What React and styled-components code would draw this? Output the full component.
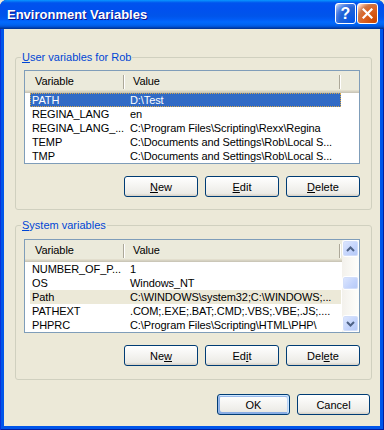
import React from "react";
import styled, { createGlobalStyle, css } from "styled-components";

const GlobalStyle = createGlobalStyle`
  html, body {
    margin: 0;
    padding: 0;
    background: #ece9d8;
  }
  body {
    font-family: "Liberation Sans", Arial, sans-serif;
    font-size: 11px;
    color: #000;
  }
`;

const userVars = [
  { name: "PATH", value: "D:\\Test", state: "active" },
  { name: "REGINA_LANG", value: "en" },
  { name: "REGINA_LANG_...", value: "C:\\Program Files\\Scripting\\Rexx\\Regina" },
  { name: "TEMP", value: "C:\\Documents and Settings\\Rob\\Local S..." },
  { name: "TMP", value: "C:\\Documents and Settings\\Rob\\Local S..." },
];

const systemVars = [
  { name: "NUMBER_OF_P...", value: "1" },
  { name: "OS", value: "Windows_NT" },
  { name: "Path", value: "C:\\WINDOWS\\system32;C:\\WINDOWS;...", state: "inactive" },
  { name: "PATHEXT", value: ".COM;.EXE;.BAT;.CMD;.VBS;.VBE;.JS;...." },
  { name: "PHPRC", value: "C:\\Program Files\\Scripting\\HTML\\PHP\\" },
];

function Window({ children }) {
  return <Frame>{children}</Frame>;
}

function ArrowIcon({ down }) {
  return (
    <svg width="9" height="6" viewBox="0 0 9 6">
      <polyline
        points={down ? "1,1 4.5,4.5 8,1" : "1,5 4.5,1.5 8,5"}
        fill="none"
        stroke="#4d6185"
        strokeWidth="2"
      />
    </svg>
  );
}

function VarList({ rows, scroll }) {
  return (
    <ListBox>
      <ListBody>
        <Header>
          <HeaderCell $pad={10}>Variable</HeaderCell>
          <HeaderCell $pad={8}>Value</HeaderCell>
          <HeaderCell $last />
        </Header>
        {rows.map((r) => (
          <Row key={r.name} $state={r.state}>
            <Cell $pad={2}>{r.name}</Cell>
            <Cell $pad={5}>{r.value}</Cell>
          </Row>
        ))}
      </ListBody>
      {scroll && (
        <ScrollBar>
          <ScrollButton>
            <ArrowIcon />
          </ScrollButton>
          <Track>
            <Thumb />
          </Track>
          <ScrollButton>
            <ArrowIcon down />
          </ScrollButton>
        </ScrollBar>
      )}
    </ListBox>
  );
}

export default function App() {
  return (
    <>
      <GlobalStyle />
      <Window>
        <TitleBar>
          <Title>Environment Variables</Title>
          <TitleButtons>
            <CaptionButton $kind="help">?</CaptionButton>
            <CaptionButton $kind="close">
              <svg width="11" height="11" viewBox="0 0 11 11">
                <path d="M1.5 1.5 L9.5 9.5 M9.5 1.5 L1.5 9.5" stroke="#fff" strokeWidth="2.2" strokeLinecap="square" />
              </svg>
            </CaptionButton>
          </TitleButtons>
        </TitleBar>
        <Client>
          <Group $top={6} $bottom={12}>
            <Legend>
              <u>U</u>ser variables for Rob
            </Legend>
            <VarList rows={userVars} />
            <ButtonRow>
              <Button>
                <u>N</u>ew
              </Button>
              <Button>
                <u>E</u>dit
              </Button>
              <Button>
                <u>D</u>elete
              </Button>
            </ButtonRow>
          </Group>
          <Group $top={7} $bottom={13}>
            <Legend>
              <u>S</u>ystem variables
            </Legend>
            <VarList rows={systemVars} scroll />
            <ButtonRow>
              <Button>
                Ne<u>w</u>
              </Button>
              <Button>
                Ed<u>i</u>t
              </Button>
              <Button>
                Del<u>e</u>te
              </Button>
            </ButtonRow>
          </Group>
          <Footer>
            <Button $default $width={73}>
              OK
            </Button>
            <Button $width={73}>Cancel</Button>
          </Footer>
        </Client>
      </Window>
    </>
  );
}

const Frame = styled.div`
  width: 384px;
  height: 430px;
  display: flex;
  flex-direction: column;
  background: #0055ea;
  border-radius: 7px 7px 0 0;
  box-shadow: inset 1px 0 #0831d9, inset -1px 0 #001ea0, inset 0 -1px #001ea0;
  overflow: hidden;
`;

const TitleBar = styled.div`
  height: 29px;
  flex: none;
  display: flex;
  align-items: center;
  justify-content: space-between;
  padding: 0 6px 0 7px;
  background: linear-gradient(
    180deg,
    #0997ff 0%,
    #0053ee 10%,
    #0050ee 30%,
    #0055eb 56%,
    #005bf5 66%,
    #026afe 76%,
    #0062ef 86%,
    #0052d6 92%,
    #0040ab 96%,
    #003092 100%
  );
`;

const Title = styled.div`
  color: #fff;
  font-weight: bold;
  font-size: 13px;
  text-shadow: 1px 1px #0f1089;
  padding-bottom: 1px;
`;

const TitleButtons = styled.div`
  display: flex;
  gap: 1px;
  padding-bottom: 2px;
`;

const CaptionButton = styled.div`
  width: 21px;
  height: 21px;
  box-sizing: border-box;
  border: 1px solid #fff;
  border-radius: 3px;
  display: flex;
  align-items: center;
  justify-content: center;
  color: #fff;
  font-weight: bold;
  font-size: 16px;
  ${(p) =>
    p.$kind === "close"
      ? css`
          background: radial-gradient(circle at 90% 90%, #cc4600 0%, #dc6527 55%, #cd7546 70%, #ffccb2 90%, #fff 100%);
        `
      : css`
          background: radial-gradient(circle at 90% 90%, #0054e9 0%, #2263d5 55%, #4479e4 70%, #a3bbec 90%, #fff 100%);
        `}
`;

const Client = styled.div`
  flex: 1;
  margin: 0 4px 4px;
  background: #ece9d8;
  padding: 22px 8px 11px 11px;
  display: flex;
  flex-direction: column;
  gap: 9px;
`;

const Group = styled.fieldset`
  margin: 0;
  min-width: 0;
  border: 1px solid #d0d0bf;
  border-radius: 3px;
  padding: ${(p) => p.$top}px 11px ${(p) => p.$bottom}px 8px;
  display: flex;
  flex-direction: column;
  gap: 12px;
`;

const Legend = styled.legend`
  color: #0046d5;
  line-height: 13px;
  padding: 0 1px;
  margin-left: -3px;
`;

const ListBox = styled.div`
  height: 94px;
  box-sizing: border-box;
  border: 1px solid #7f9db9;
  background: #fff;
  display: flex;
  overflow: hidden;
`;

const ListBody = styled.div`
  flex: 1;
  min-width: 0;
  display: flex;
  flex-direction: column;
  letter-spacing: -0.1px;
`;

const Header = styled.div`
  height: 22px;
  flex: none;
  display: grid;
  grid-template-columns: 100px 216px 1fr;
  background: #ebeadb;
  box-shadow: inset 0 -1px #cbc7b8, inset 0 -2px #d6d2c2, inset 0 -3px #e2decd;
`;

const HeaderCell = styled.div`
  display: flex;
  align-items: center;
  padding: 0 0 3px ${(p) => p.$pad || 0}px;
  white-space: nowrap;
  ${(p) =>
    !p.$last &&
    css`
      background: linear-gradient(#aca899, #aca899) right 1px top 4px / 1px 14px no-repeat,
        linear-gradient(#fff, #fff) right 0 top 4px / 1px 14px no-repeat;
    `}
`;

const Row = styled.div`
  height: 14px;
  line-height: 14px;
  margin-left: 5px;
  width: 311px;
  display: grid;
  grid-template-columns: 95px 216px;
  box-sizing: border-box;
  ${(p) =>
    p.$state === "active" &&
    css`
      background: #316ac5;
      color: #fff;
      outline: 1px dotted #d8a84a;
      outline-offset: -1px;
    `}
  ${(p) =>
    p.$state === "inactive" &&
    css`
      background: #ece9d8;
    `}
`;

const Cell = styled.div`
  padding-left: ${(p) => p.$pad}px;
  white-space: nowrap;
  overflow: hidden;
`;

const ScrollBar = styled.div`
  width: 17px;
  flex: none;
  display: flex;
  flex-direction: column;
  background: linear-gradient(90deg, #f3f1ec, #fefefb);
`;

const ScrollButton = styled.div`
  height: 17px;
  box-sizing: border-box;
  border: 1px solid #fff;
  border-radius: 3px;
  background: linear-gradient(135deg, #dfe8fe, #c2d3fc 60%, #b4c8f6);
  box-shadow: inset 0 0 0 1px #d2defa;
  display: flex;
  align-items: center;
  justify-content: center;
`;

const Track = styled.div`
  flex: 1;
  padding-top: 19px;
`;

const Thumb = styled(ScrollButton)`
  height: 14px;
`;

const ButtonRow = styled.div`
  display: flex;
  justify-content: flex-end;
  gap: 7px;
`;

const Footer = styled(ButtonRow)`
  margin-top: 5px;
  padding-right: 2px;
`;

const Button = styled.div`
  width: ${(p) => p.$width || 74}px;
  height: 21px;
  box-sizing: border-box;
  border: 1px solid #003c74;
  border-radius: 3px;
  background: linear-gradient(180deg, #fff, #ecebe6 86%, #d6d0c5);
  display: flex;
  align-items: center;
  justify-content: center;
  font-size: 11px;
  ${(p) =>
    p.$default &&
    css`
      box-shadow: inset -1px 1px #cee7ff, inset 1px 2px #98b8ea, inset -2px 2px #bcd4f6, inset 1px -1px #89ade4,
        inset 2px -2px #89ade4;
    `}
`;
